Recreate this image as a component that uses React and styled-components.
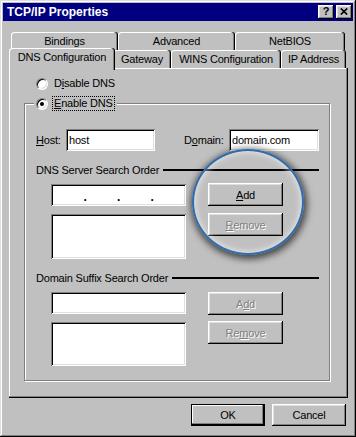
import React from "react";
import styled, { createGlobalStyle, css } from "styled-components";

const GlobalStyle = createGlobalStyle`
  html, body { margin: 0; padding: 0; background: #c0c0c0; }
  * { box-sizing: border-box; }
`;

const Window = styled.div`
  position: relative;
  width: 356px;
  height: 437px;
  padding: 3px;
  background: #c0c0c0;
  box-shadow: inset -1px -1px #000, inset 1px 1px #dfdfdf, inset -2px -2px #808080, inset 2px 2px #fff;
  display: flex;
  flex-direction: column;
  font-family: "Liberation Sans", Arial, sans-serif;
  font-size: 11px;
  letter-spacing: -0.2px;
  color: #000;
`;

const TitleBar = styled.div`
  height: 18px;
  flex: none;
  background: #000080;
  display: flex;
  align-items: center;
  padding: 0 1px 0 4px;
`;

const Title = styled.span`
  flex: 1;
  color: #fff;
  font-weight: bold;
  font-size: 12px;
  letter-spacing: 0;
`;

const CaptionButton = styled.div`
  width: 16px;
  height: 14px;
  margin-left: ${(p) => p.$gap || 0}px;
  background: #c0c0c0;
  box-shadow: inset -1px -1px #000, inset 1px 1px #fff, inset -2px -2px #808080, inset 2px 2px #dfdfdf;
  display: flex;
  align-items: center;
  justify-content: center;
  font-weight: bold;
  font-size: 11px;
  line-height: 1;
  letter-spacing: 0;
  padding-bottom: 1px;
`;

const Body = styled.div`
  flex: 1;
  display: flex;
  flex-direction: column;
  padding: 11px 5px 0 6px;
`;

const TabRow = styled.div`
  display: flex;
  height: 18px;
  padding-left: 2px;
`;

const Tab = styled.div`
  position: relative;
  flex: none;
  width: ${(p) => p.$w}px;
  height: 18px;
  display: flex;
  align-items: center;
  justify-content: center;
  background: #c0c0c0;
  border-radius: 3px 3px 0 0;
  box-shadow: inset -1px 0 #000, inset -2px 0 #808080, inset 1px 1px #fff;
  white-space: nowrap;
  ${(p) =>
    p.$active &&
    css`
      z-index: 2;
      width: ${p.$w + 4}px;
      height: 22px;
      margin: -2px -2px 0 -2px;
      padding-bottom: 4px;
    `}
`;

const Panel = styled.div`
  height: 330px;
  flex: none;
  background: #c0c0c0;
  box-shadow: inset -1px -1px #000, inset -2px -2px #808080, inset 1px 1px #fff;
  padding: 8px 17px 16px 15px;
  display: flex;
  flex-direction: column;
`;

const RadioRow = styled.div`
  display: flex;
  align-items: center;
  height: 15px;
  padding-left: ${(p) => p.$indent || 0}px;
`;

const RadioCircle = styled.span`
  flex: none;
  width: 12px;
  height: 12px;
  border-radius: 50%;
  background: #fff;
  border: 1px solid;
  border-color: #808080 #fff #fff #808080;
  box-shadow: inset 1px 1px #000, inset -1px -1px #dfdfdf;
  display: flex;
  align-items: center;
  justify-content: center;
  &::after {
    content: "";
    width: 4px;
    height: 4px;
    border-radius: 50%;
    background: #000;
    display: ${(p) => (p.$checked ? "block" : "none")};
  }
`;

const RadioText = styled.span`
  margin-left: 4px;
  padding: 0 1px;
  line-height: 13px;
  border: 1px ${(p) => (p.$focus ? "dotted #000" : "solid transparent")};
`;

const GroupBox = styled.fieldset`
  flex: 1;
  min-width: 0;
  margin: 5px 0 0 0;
  padding: 18px 11px 0 11px;
  border: 1px solid;
  border-color: #808080 #fff #fff #808080;
  box-shadow: inset -1px -1px #808080, inset 1px 1px #fff;
`;

const Legend = styled.legend`
  margin-left: -2px;
  padding: 0 2px;
  background: #c0c0c0;
`;

const Content = styled.div`
  display: flex;
  flex-direction: column;
`;

const FieldRow = styled.div`
  display: flex;
  align-items: center;
  height: 22px;
`;

const FieldLabel = styled.span`
  flex: none;
  width: ${(p) => p.$w}px;
  margin-left: ${(p) => p.$ml || 0}px;
`;

const TextBox = styled.div`
  flex: none;
  width: ${(p) => p.$w}px;
  height: 22px;
  background: #fff;
  box-shadow: inset 1px 1px #808080, inset -1px -1px #fff, inset 2px 2px #000, inset -2px -2px #dfdfdf;
  padding: 0 3px;
  display: flex;
  align-items: center;
`;

const IpBox = styled(TextBox)`
  padding: 0 2px;
`;

const IpSegment = styled.span`
  flex: 1;
`;

const IpDot = styled.span`
  width: 3px;
  text-align: center;
  padding-top: 3px;
  font-weight: bold;
  font-size: 12px;
`;

const ListBox = styled.div`
  height: ${(p) => p.$h}px;
  background: #fff;
  box-shadow: inset 1px 1px #808080, inset -1px -1px #fff, inset 2px 2px #000, inset -2px -2px #dfdfdf;
`;

const Heading = styled.div`
  display: flex;
  align-items: center;
  height: 13px;
  margin-top: 12px;
  white-space: nowrap;
  &::after {
    content: "";
    flex: 1;
    height: 2px;
    background: #000;
    margin-left: 4px;
  }
`;

const Block = styled.div`
  display: flex;
  margin-top: ${(p) => p.$mt}px;
  padding-left: 15px;
`;

const LeftCol = styled.div`
  display: flex;
  flex-direction: column;
  gap: 8px;
  width: 135px;
  padding-top: ${(p) => p.$pt || 0}px;
`;

const RightCol = styled.div`
  display: flex;
  flex-direction: column;
  gap: ${(p) => p.$gap}px;
  margin-left: 22px;
`;

const bevel = css`
  box-shadow: inset -1px -1px #000, inset 1px 1px #fff, inset -2px -2px #808080, inset 2px 2px #dfdfdf;
`;

const Button = styled.button`
  width: ${(p) => p.$w || 75}px;
  height: ${(p) => p.$h || 23}px;
  border: none;
  padding: 0;
  margin: 0;
  background: #c0c0c0;
  font: inherit;
  letter-spacing: inherit;
  color: #000;
  ${bevel}
  ${(p) =>
    p.$default &&
    css`
      box-shadow: inset 0 0 0 1px #000, inset -2px -2px #000, inset -3px -3px #808080, inset 2px 2px #fff;
    `}
  &:disabled {
    color: #808080;
    text-shadow: 1px 1px 0 #fff;
  }
`;

const Footer = styled.div`
  display: flex;
  justify-content: flex-end;
  gap: 7px;
  margin-top: 6px;
  padding-right: 2px;
`;

const Spotlight = styled.div`
  position: absolute;
  left: 192px;
  top: 149px;
  width: 112px;
  height: 106px;
  border-radius: 50%;
  border: 2px solid #2e6cae;
  box-shadow: 1px 2px 7px 2px rgba(0, 0, 0, 0.65), inset 0 0 6px 1px rgba(255, 255, 255, 0.65);
  pointer-events: none;
`;

export default function App() {
  return (
    <>
      <GlobalStyle />
      <Window>
        <TitleBar>
          <Title>TCP/IP Properties</Title>
          <CaptionButton>?</CaptionButton>
          <CaptionButton $gap={2}>
            <svg width="8" height="7" viewBox="0 0 8 7">
              <path d="M0.8 0.5 L7.2 6.5 M7.2 0.5 L0.8 6.5" stroke="#000" strokeWidth="1.7" fill="none" />
            </svg>
          </CaptionButton>
        </TitleBar>
        <Body>
          <TabRow>
            <Tab $w={107}>Bindings</Tab>
            <Tab $w={117}>Advanced</Tab>
            <Tab $w={110}>NetBIOS</Tab>
          </TabRow>
          <TabRow>
            <Tab $w={102} $active>DNS Configuration</Tab>
            <Tab $w={58}>Gateway</Tab>
            <Tab $w={110}>WINS Configuration</Tab>
            <Tab $w={65}>IP Address</Tab>
          </TabRow>
          <Panel>
            <RadioRow $indent={12}>
              <RadioCircle />
              <RadioText>
                D<u>i</u>sable DNS
              </RadioText>
            </RadioRow>
            <GroupBox>
              <Legend>
                <RadioRow>
                  <RadioCircle $checked />
                  <RadioText $focus>
                    <u>E</u>nable DNS
                  </RadioText>
                </RadioRow>
              </Legend>
              <Content>
                <FieldRow>
                  <FieldLabel $w={30}>
                    <u>H</u>ost:
                  </FieldLabel>
                  <TextBox $w={89}>host</TextBox>
                  <FieldLabel $w={45} $ml={29}>
                    D<u>o</u>main:
                  </FieldLabel>
                  <TextBox $w={90}>domain.com</TextBox>
                </FieldRow>
                <Heading>DNS Server Search Order</Heading>
                <Block $mt={7}>
                  <LeftCol $pt={1}>
                    <IpBox $w={135}>
                      <IpSegment />
                      <IpDot>.</IpDot>
                      <IpSegment />
                      <IpDot>.</IpDot>
                      <IpSegment />
                      <IpDot>.</IpDot>
                      <IpSegment />
                    </IpBox>
                    <ListBox $h={45} />
                  </LeftCol>
                  <RightCol $gap={7}>
                    <Button>
                      <u>A</u>dd
                    </Button>
                    <Button disabled>
                      <u>R</u>emove
                    </Button>
                  </RightCol>
                </Block>
                <Heading>Domain Suffix Search Order</Heading>
                <Block $mt={8}>
                  <LeftCol>
                    <TextBox $w={135} />
                    <ListBox $h={44} />
                  </LeftCol>
                  <RightCol $gap={6}>
                    <Button disabled>
                      A<u>d</u>d
                    </Button>
                    <Button disabled>
                      Re<u>m</u>ove
                    </Button>
                  </RightCol>
                </Block>
              </Content>
            </GroupBox>
          </Panel>
          <Footer>
            <Button $w={74} $h={22} $default>
              OK
            </Button>
            <Button $w={74} $h={22}>
              Cancel
            </Button>
          </Footer>
        </Body>
        <Spotlight />
      </Window>
    </>
  );
}
